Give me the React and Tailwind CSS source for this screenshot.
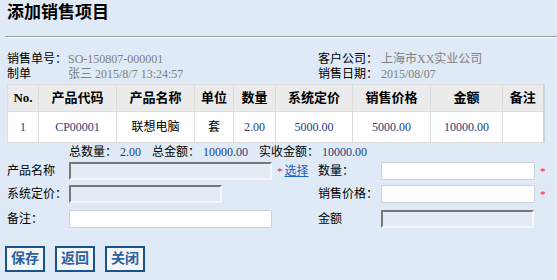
const FONT = { fontFamily: '"Liberation Serif", "Noto Sans CJK SC", serif' }

const COLS = [
  { key: 'no', label: 'No.', w: 31 },
  { key: 'code', label: '产品代码', w: 78 },
  { key: 'name', label: '产品名称', w: 78 },
  { key: 'unit', label: '单位', w: 39 },
  { key: 'qty', label: '数量', w: 42 },
  { key: 'list', label: '系统定价', w: 77 },
  { key: 'price', label: '销售价格', w: 78 },
  { key: 'amount', label: '金额', w: 72 },
  { key: 'memo', label: '备注', w: 41 },
]

const ROWS = [
  { no: '1', code: 'CP00001', name: '联想电脑', unit: '套', qty: '2.00', list: '5000.00', price: '5000.00', amount: '10000.00', memo: '' },
]

const NUM = 'text-[#1f3d7a]'

function Input({ disabled, width }) {
  return (
    <div
      className={
        disabled
          ? 'h-[18px] bg-[#e3ebf5] border-2 border-t-[#777] border-l-[#777] border-b-[#f4f6f9] border-r-[#f4f6f9]'
          : 'h-[18px] bg-white border border-[#c9d2dc] rounded-[2px]'
      }
      style={{ width }}
    />
  )
}

function Star() {
  return <span className="text-[#e0204a] text-[11px] leading-none ml-[5px]">*</span>
}

export default function App() {
  return (
    <div className="w-[557px] h-[280px] bg-[#dfeaf6] text-[12px] text-black overflow-hidden" style={FONT}>
      <h1 className="pl-[7px] pt-[3px] text-[17px] font-bold leading-[20px]">添加销售项目</h1>
      <div className="ml-[5px] mt-[13px] h-[2px] border-t border-t-[#9a9a9a] border-b border-b-white" />

      {/* header info */}
      <div className="mt-[14px] pl-[7px] flex leading-[15px]">
        <div className="w-[311px]">
          <div className="flex"><span className="w-[61px]">销售单号：</span><span className="text-[#808080]">SO-150807-000001</span></div>
          <div className="flex"><span className="w-[61px]">制单</span><span className="text-[#808080]">张三 2015/8/7 13:24:57</span></div>
        </div>
        <div>
          <div className="flex"><span className="w-[63px]">客户公司：</span><span className="text-[#808080]">上海市XX实业公司</span></div>
          <div className="flex"><span className="w-[63px]">销售日期：</span><span className="text-[#808080]">2015/08/07</span></div>
        </div>
      </div>

      {/* lines table */}
      <table className="ml-[7px] mt-[2px] border-collapse table-fixed w-[537px] border-r-2 border-r-[#cfd3d8]">
        <thead>
          <tr className="h-[27px] bg-[#ebebeb]">
            {COLS.map(c => (
              <th key={c.key} className="border border-[#dcdcdc] font-bold text-[13px] p-0" style={{ width: c.w }}>{c.label}</th>
            ))}
          </tr>
        </thead>
        <tbody>
          {ROWS.map(r => (
            <tr key={r.no} className="h-[31px] bg-white">
              {COLS.map(c => (
                <td
                  key={c.key}
                  className={'border border-[#dcdcdc] text-center p-0 ' + (c.key === 'name' || c.key === 'unit' ? '' : NUM)}
                >
                  {r[c.key]}
                </td>
              ))}
            </tr>
          ))}
        </tbody>
      </table>

      {/* totals */}
      <div className="pl-[69px] leading-[16px] mt-[1px] flex gap-[11px]">
        <span>总数量： <span className={NUM}>2.00</span></span>
        <span>总金额： <span className={NUM}>10000.00</span></span>
        <span>实收金额： <span className={NUM}>10000.00</span></span>
      </div>

      {/* form */}
      <div className="pl-[7px] mt-[2px] flex flex-col gap-[5px]">
        <div className="flex items-center h-[18px]">
          <div className="w-[311px] flex items-center">
            <span className="w-[62px]">产品名称</span>
            <Input disabled width={203} />
            <Star />
            <a className="ml-[2px] text-[#1a5fc4] underline">选择</a>
          </div>
          <span className="w-[63px]">数量：</span>
          <Input width={154} />
          <Star />
        </div>
        <div className="flex items-center h-[18px]">
          <div className="w-[311px] flex items-center">
            <span className="w-[62px]">系统定价：</span>
            <Input disabled width={153} />
          </div>
          <span className="w-[63px]">销售价格：</span>
          <Input width={154} />
          <Star />
        </div>
        <div className="flex items-center h-[19px] mt-[1px]">
          <div className="w-[311px] flex items-center">
            <span className="w-[62px]">备注：</span>
            <Input width={203} />
          </div>
          <span className="w-[63px]">金额</span>
          <Input disabled width={153} />
        </div>
      </div>

      {/* actions */}
      <div className="pl-[5px] mt-[18px] flex gap-[10px]">
        {['保存', '返回', '关闭'].map(t => (
          <button
            key={t}
            className="h-[26px] px-[4px] border-2 border-[#17548e] bg-[#f4f5f7] text-[#2f61a0] font-bold text-[14px] leading-none"
          >
            {t}
          </button>
        ))}
      </div>
    </div>
  )
}
